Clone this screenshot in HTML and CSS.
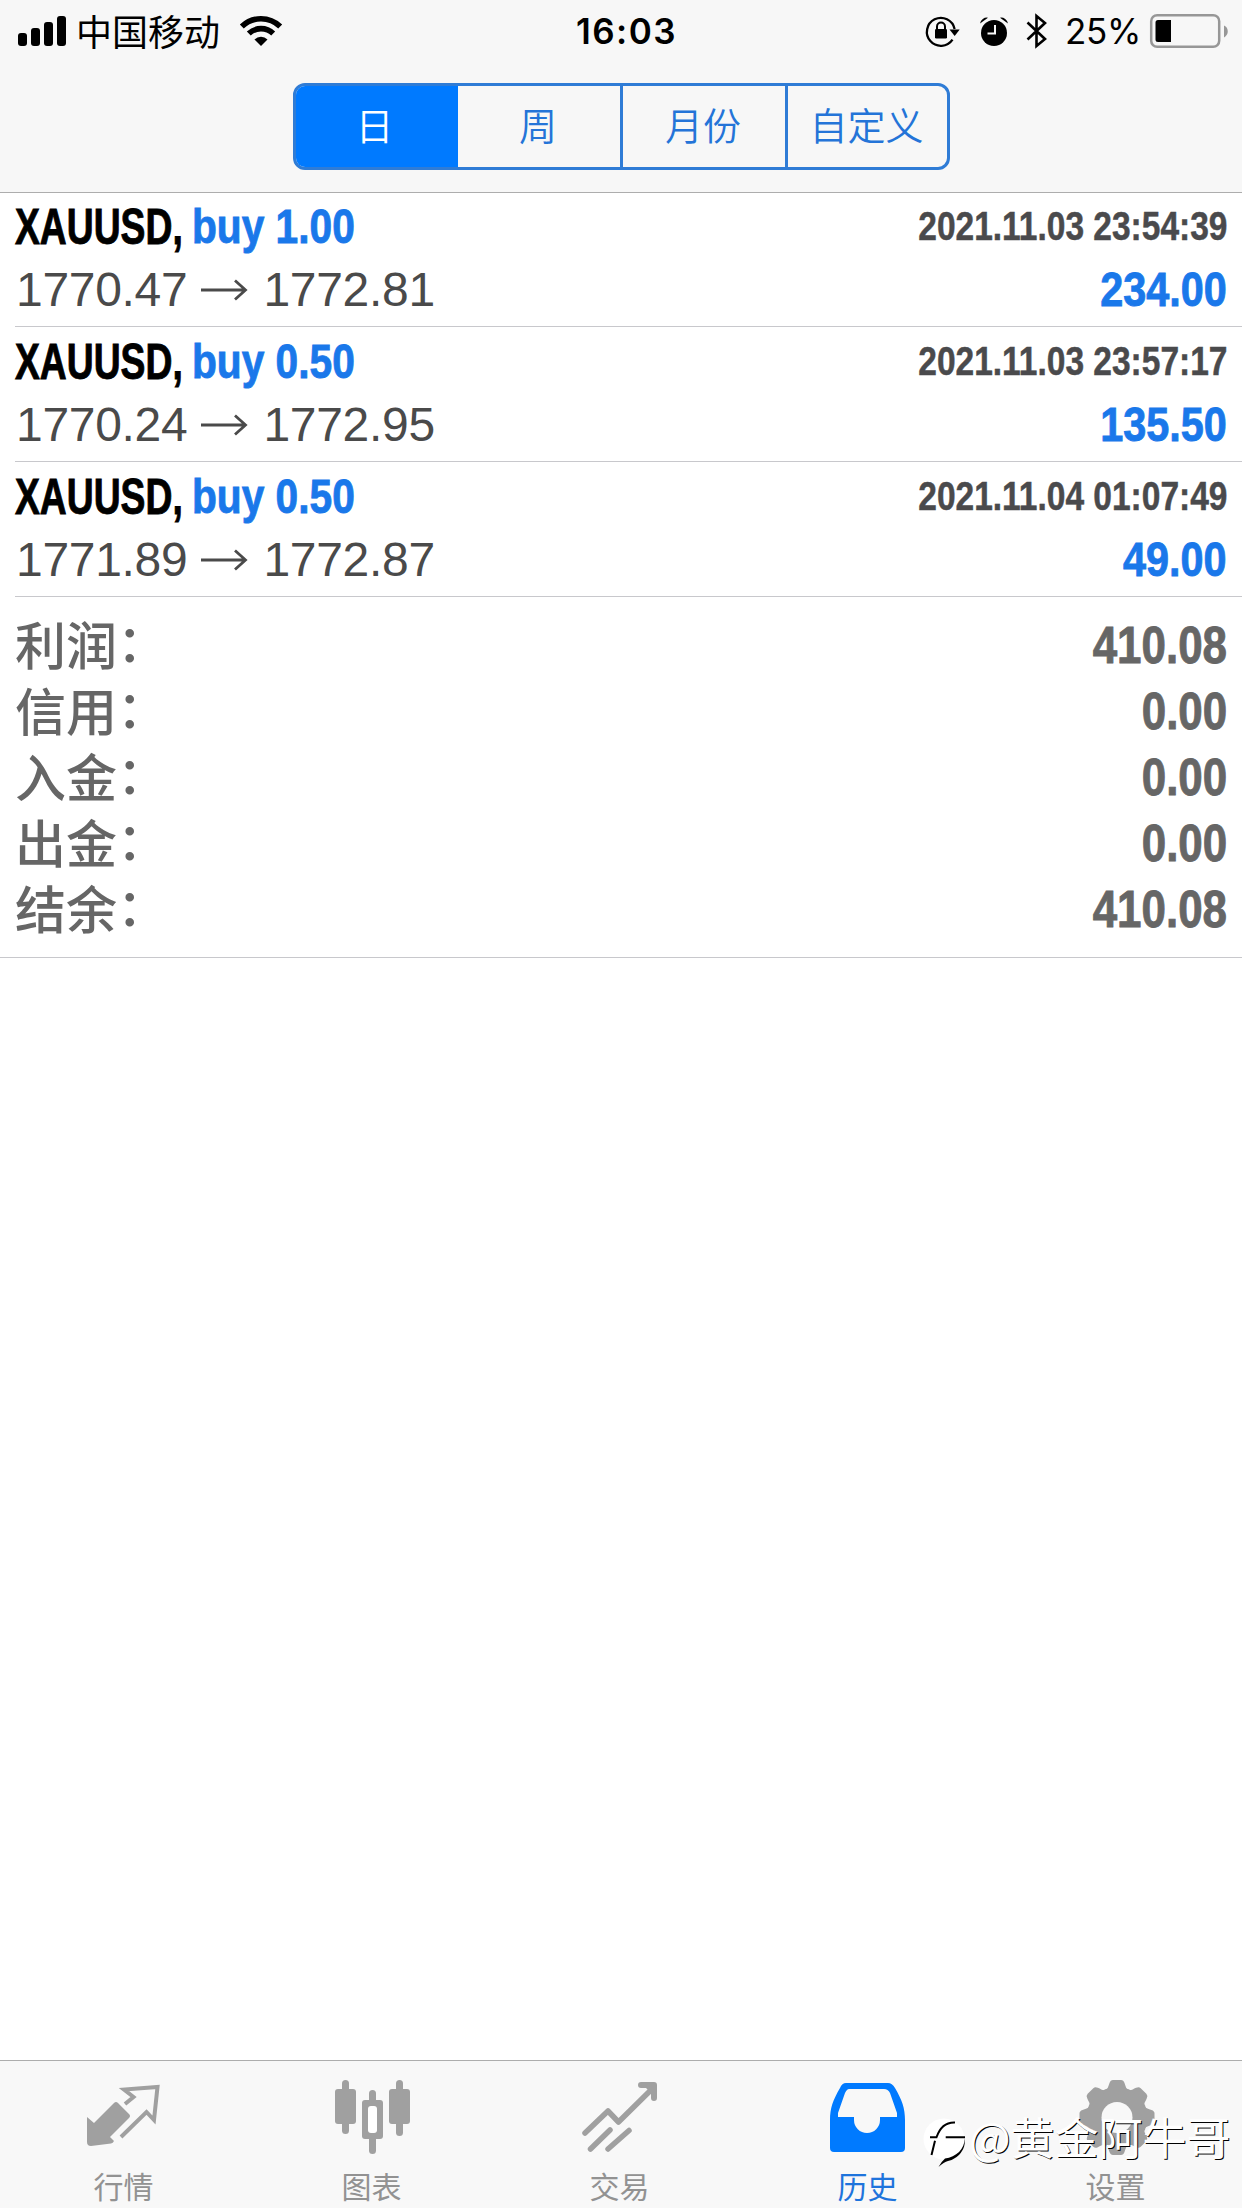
FILE: index.html
```html
<!DOCTYPE html>
<html lang="zh-CN">
<head>
<meta charset="utf-8">
<title>历史</title>
<link rel="stylesheet" href="styles.css">
</head>
<body>
<div class="screen">
  <header class="top">
    <div class="status">
      <div class="status-left">
        <svg class="signal" width="48" height="30" viewBox="0 0 48 30"><rect x="0" y="17" width="9" height="13" rx="3"/><rect x="13" y="12" width="9" height="18" rx="3"/><rect x="26" y="6" width="9" height="24" rx="3"/><rect x="39" y="0" width="9" height="30" rx="3"/></svg>
        <span class="carrier">中国移动</span>
        <svg class="wifi" width="42" height="30" viewBox="0 0 42 30" fill="none" stroke="#000"><path d="M1.8 10.6a27.5 27.5 0 0 1 38.4 0" stroke-width="5.6"/><path d="M8.8 17.6a17.5 17.5 0 0 1 24.4 0" stroke-width="5.6"/><path d="M14.5 23.5a9.3 9.3 0 0 1 13 0L21 30z" fill="#000" stroke="none"/></svg>
      </div>
      <span class="clock">16:03</span>
      <div class="status-right">
        <svg class="lock" width="34" height="30" viewBox="0 0 34 30"><path d="M26.5 23.7A14 14 0 1 1 28.6 13" fill="none" stroke="#000" stroke-width="2.3"/><path d="M23.5 13.5H33.7L28.7 20z"/><rect x="9" y="13" width="12" height="9.5" rx="1.2"/><path d="M11 14v-3.5a4 4 0 0 1 8 0V14" fill="none" stroke="#000" stroke-width="2"/></svg>
        <svg class="alarm" width="28" height="29" viewBox="0 0 28 29"><circle cx="14" cy="16" r="13"/><path d="M0 6.500A7 7 0 0 1 8 .7zM28 6.500A7 7 0 0 0 20 .7z"/><path d="M15 8v8.500H7.500" fill="none" stroke="#f7f7f7" stroke-width="2"/></svg>
        <svg class="bt" width="22" height="36" viewBox="0 0 22 36"><path d="M1.500 9.500L19 26 10.500 33V3L19 10 1.500 26.500" fill="none" stroke="#000" stroke-width="2.6"/></svg>
        <span class="percent">25%</span>
        <svg class="battery" width="78" height="34" viewBox="0 0 78 34"><rect x="1.200" y="1.200" width="68" height="31.600" rx="6" fill="none" stroke="#979797" stroke-width="2.5"/><path d="M8 6H21V28H8a2.500 2.500 0 0 1-2.500-2.500V8.500A2.500 2.500 0 0 1 8 6z"/><path d="M74 11.500c5 2 5 9.500 0 12z" fill="#979797"/></svg>
      </div>
    </div>
    <nav class="segments">
      <span class="segment selected">日</span><span class="segment">周</span><span class="segment">月份</span><span class="segment">自定义</span>
    </nav>
  </header>

  <main class="content">
    <section class="deal">
      <div class="line"><span class="symbol">XAUUSD,</span><span class="side">buy 1.00</span><span class="date">2021.11.03 23:54:39</span></div>
      <div class="line"><span class="price">1770.47</span><svg class="arrow" viewBox="0 0 48 24"><path d="M1 12H45M35 2.500L45.500 12 35 21.500"/></svg><span class="price">1772.81</span><span class="profit">234.00</span></div>
    </section>
    <section class="deal">
      <div class="line"><span class="symbol">XAUUSD,</span><span class="side">buy 0.50</span><span class="date">2021.11.03 23:57:17</span></div>
      <div class="line"><span class="price">1770.24</span><svg class="arrow" viewBox="0 0 48 24"><path d="M1 12H45M35 2.500L45.500 12 35 21.500"/></svg><span class="price">1772.95</span><span class="profit">135.50</span></div>
    </section>
    <section class="deal">
      <div class="line"><span class="symbol">XAUUSD,</span><span class="side">buy 0.50</span><span class="date">2021.11.04 01:07:49</span></div>
      <div class="line"><span class="price">1771.89</span><svg class="arrow" viewBox="0 0 48 24"><path d="M1 12H45M35 2.500L45.500 12 35 21.500"/></svg><span class="price">1772.87</span><span class="profit">49.00</span></div>
    </section>
    <section class="totals">
      <div class="total"><span class="label">利润<span class="colon">：</span></span><span class="amount">410.08</span></div>
      <div class="total"><span class="label">信用<span class="colon">：</span></span><span class="amount">0.00</span></div>
      <div class="total"><span class="label">入金<span class="colon">：</span></span><span class="amount">0.00</span></div>
      <div class="total"><span class="label">出金<span class="colon">：</span></span><span class="amount">0.00</span></div>
      <div class="total"><span class="label">结余<span class="colon">：</span></span><span class="amount">410.08</span></div>
    </section>
  </main>

  <footer class="tabs">
    <div class="tab"><svg width="76" height="76" viewBox="0 0 76 76"><path d="M1 33L8 39 28 19Q30 17 32 19L43 30Q45 32 43 34L24 53 28 57Q27 59 25 59.500L5 62Q1 62 1 58z" fill="#a0a0a0"/><path d="M39 20L47.500 13 38 5.500 71.500 3 68 36 60.500 28 35 53" fill="none" stroke="#a0a0a0" stroke-width="4"/></svg><span>行情</span></div>
    <div class="tab"><svg width="76" height="76" viewBox="-1 0 76 76" fill="#a0a0a0"><rect x="0" y="5" width="21" height="35" rx="3"/><rect x="7" y="-4" width="7" height="54" rx="3.500"/><rect x="54" y="5" width="21" height="35" rx="3"/><rect x="61" y="-4" width="7" height="56" rx="3.500"/><rect x="27" y="16" width="21" height="39" rx="3"/><rect x="34" y="6" width="7" height="64" rx="3.500"/><rect x="33" y="22" width="9" height="27" rx="3" fill="#fff"/></svg><span>图表</span></div>
    <div class="tab"><svg width="76" height="76" viewBox="0 0 76 76" fill="none" stroke="#a0a0a0" stroke-width="5.500"><path d="M3 49L26 27 36.500 38 71 4" stroke-linecap="round" stroke-linejoin="round"/><path d="M59 -2H72Q75 -2 75 1V14Q75 17 72 17T69 14V9L64 4H59Q56 4 56 1T59 -2z" fill="#a0a0a0" stroke="none"/><path d="M8.500 65L28 46M26 65L47 46.500" stroke-linecap="round"/></svg><span>交易</span></div>
    <div class="tab active"><svg width="76" height="76" viewBox="0 0 76 76"><path d="M16 -1H58Q62 -1 65 4C72 16 75 24 75 36V64Q75 68 71 68H4Q0 68 0 64V36C0 24 3 16 10 4Q12 -1 16 -1z" fill="#007aff"/><path d="M19 5H54Q58 5 60 9L67 29V33H50V36A13 13 0 0 1 24 36V33H8V29L15 9Q17 5 19 5z" fill="#f8f8f8"/></svg><span>历史</span></div>
    <div class="tab"><svg width="76" height="76" viewBox="-1 0 76 76"><defs><path id="tooth" d="M24 7C29 6 29 3 30.500 -1Q31.500 -4 34 -4H42Q44.500 -4 45.500 -1C47 3 47 6 52 7z"/></defs><g fill="#a0a0a0"><circle cx="38" cy="33.500" r="30.500"/><use href="#tooth"/><use href="#tooth" transform="rotate(45 38 33.500)"/><use href="#tooth" transform="rotate(90 38 33.500)"/><use href="#tooth" transform="rotate(135 38 33.500)"/><use href="#tooth" transform="rotate(180 38 33.500)"/><use href="#tooth" transform="rotate(225 38 33.500)"/><use href="#tooth" transform="rotate(270 38 33.500)"/><use href="#tooth" transform="rotate(315 38 33.500)"/></g><circle cx="38" cy="33.500" r="15.500" fill="#f8f8f8"/></svg><span>设置</span></div>
  </footer>

  <div class="watermark">
    <svg width="44" height="50" viewBox="0 0 44 50"><circle cx="19" cy="24" r="20.500" fill="#fff"/><path d="M5 22.300H11.500C14 15 19 7 30 7.500M20.700 22.300H40M10 25.700L6.500 40" fill="none" stroke="#000" stroke-width="2"/><path d="M39.500 23.500C40 34 31 42 20 43.500Q16 47 13.500 52Q19 47 23 46C33 44 41.500 34 39.500 23.500z"/></svg>
    <span>@黄金阿牛哥</span>
  </div>
</div>
</body>
</html>
```
FILE: styles.css
```css
* { box-sizing: border-box; }
body { margin: 0; background: #fff; font-family: "Liberation Sans", "Noto Sans CJK SC", sans-serif; }
svg { display: block; overflow: visible; flex: none; }
.screen { position: relative; width: 1242px; height: 2208px; display: flex; flex-direction: column; overflow: hidden; white-space: nowrap; }

.top { height: 193px; background: #f7f7f7; border-bottom: 1px solid #adadad; }
.status { height: 62px; padding: 0 14px 0 18px; display: grid; grid-template-columns: 1fr auto 1fr; align-items: center; color: #000; }
.status-left, .status-right { display: flex; align-items: center; }
.status-right { justify-content: flex-end; }
.carrier { margin: -3px 0 0 10px; font: 36px/60px "Noto Sans CJK SC", sans-serif; }
.wifi { margin-left: 20px; }
.clock { padding-left: 7px; font: 600 35px/62px Inter, sans-serif; letter-spacing: 1.5px; }
.alarm { margin-left: 20px; }
.bt { margin-left: 18px; }
.percent { margin: 0 9px 0 17px; font: 35px/62px Inter, sans-serif; letter-spacing: -0.3px; }

/* Period selector */
.segments { width: 657px; height: 87px; margin: 21px 0 0 293px; display: grid; grid-template-columns: 162px 162px 165px 1fr; border: 3px solid #2f7cd6; border-radius: 12px; overflow: hidden; }
.segment { height: 81px; padding: 0 2px 5px 0; display: flex; align-items: center; justify-content: center; font: 350 38px/76px "Noto Sans CJK SC", sans-serif; color: #2474d8; border-left: 3px solid #2f7cd6; }
.segment.selected { height: 87px; padding-bottom: 6px; background: #007aff; color: #fff; border: 0; margin: -3px 0 -3px -3px; }
.selected + .segment { border-left: 0; }

/* Deals */
.content { flex: 1; }
.deal { height: 135px; margin-left: 15px; padding: 3px 15px 0 0; border-bottom: 1px solid #c8c8cc; }
.deal:first-child { height: 134px; padding-top: 2px; }
.line { height: 63px; display: flex; align-items: center; }
.symbol, .side, .date, .profit, .amount { font-family: "Liberation Sans", sans-serif; font-weight: 700; -webkit-text-stroke: 0.9px currentColor; }
.symbol { width: 177px; margin-top: -1px; font-size: 49.5px; color: #000; transform: scaleX(0.753); transform-origin: left; }
.side { width: 170px; margin-top: -2px; font-size: 49px; color: #1a78ea; transform: scaleX(0.83); transform-origin: left; }
.date { margin-left: auto; font-size: 41px; color: #4a4a4c; transform: scaleX(0.817); transform-origin: right; -webkit-text-stroke-width: 0.5px; }
.price { font-size: 48px; color: #4a4a4a; letter-spacing: -0.3px; margin-left: 1px; }
.arrow { width: 48px; height: 24px; margin: 0 14px 0 13px; fill: none; stroke: #4a4a4a; stroke-width: 2.8px; }
.profit { margin: -1px 0 0 auto; font-size: 49px; color: #1a78ea; transform: scaleX(0.845); transform-origin: right; }

/* Summary */
.totals { height: 361px; padding: 15px 15px 0; border-bottom: 1px solid #c8c8cc; }
.total { height: 66px; display: flex; align-items: center; justify-content: space-between; color: #666; font: 500 51px/60px "Noto Sans CJK SC", sans-serif; }
.label { display: flex; margin-top: -5px; }
.colon { margin-top: -3px; }
.amount { font-size: 52px; transform: scaleX(0.845); transform-origin: right; }

.tabs { height: 148px; display: grid; grid-template-columns: repeat(5, 248px); background: #f8f8f8; border-top: 1px solid #adadad; }
.tab { padding-top: 23px; display: flex; flex-direction: column; align-items: center; color: #929292; font: 30px/44px "Noto Sans CJK SC", sans-serif; }
.tab span { margin: 3px 1px 0 0; }
.tab.active { color: #1e74dc; }
.watermark { position: absolute; left: 925px; top: 2115px; display: flex; align-items: flex-start; color: #fff; font: 44px/50px "Noto Sans CJK SC", sans-serif; text-shadow: 1px 1px 0 #000; }
.watermark span { margin-top: -4px; }
```
